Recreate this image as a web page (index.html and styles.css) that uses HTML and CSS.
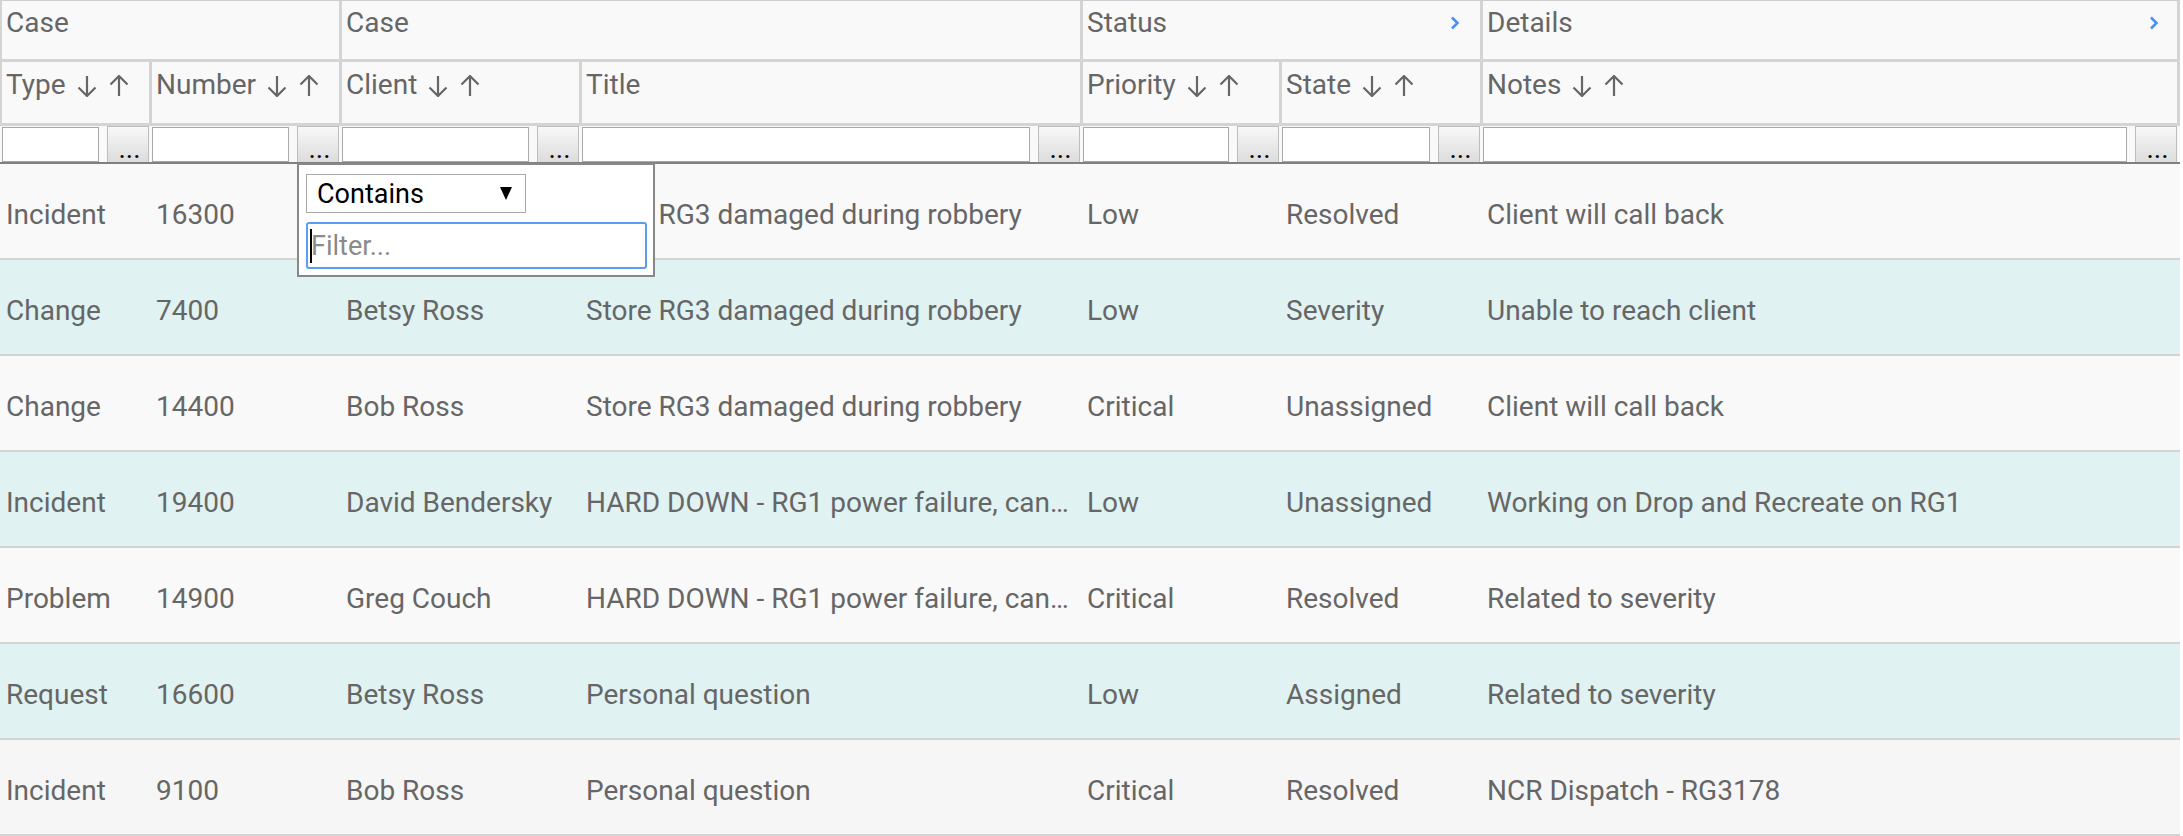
FILE: index.html
```html
<!DOCTYPE html>
<html lang="en">
<head>
<meta charset="utf-8">
<title>Cases grid</title>
<link rel="stylesheet" href="styles.css">
</head>
<body>
<div class="grid" role="grid">
  <div class="row hrow group" role="row">
    <div class="hcell span2" role="columnheader">Case</div>
    <div class="hcell span2" role="columnheader">Case</div>
    <div class="hcell span2" role="columnheader">Status
      <svg class="chev" width="10" height="14" viewBox="0 0 10 14"><polyline points="2,1.5 7.5,7 2,12.5" fill="none" stroke="#4b8df8" stroke-width="2.5"/></svg>
    </div>
    <div class="hcell" role="columnheader">Details
      <svg class="chev chev-last" width="10" height="14" viewBox="0 0 10 14"><polyline points="2,1.5 7.5,7 2,12.5" fill="none" stroke="#4b8df8" stroke-width="2.5"/></svg>
    </div>
  </div>
  <div class="row hrow cols" role="row">
    <div class="hcell" role="columnheader"><span>Type</span><span class="sort"><svg class="arrow" viewBox="0 0 22 22"><path d="M11 1V21M2.5 12.5L11 21L19.5 12.5"/></svg><svg class="arrow" viewBox="0 0 22 22"><path d="M11 21V1M2.5 9.5L11 1L19.5 9.5"/></svg></span></div>
    <div class="hcell" role="columnheader"><span>Number</span><span class="sort"><svg class="arrow" viewBox="0 0 22 22"><path d="M11 1V21M2.5 12.5L11 21L19.5 12.5"/></svg><svg class="arrow" viewBox="0 0 22 22"><path d="M11 21V1M2.5 9.5L11 1L19.5 9.5"/></svg></span></div>
    <div class="hcell" role="columnheader"><span>Client</span><span class="sort"><svg class="arrow" viewBox="0 0 22 22"><path d="M11 1V21M2.5 12.5L11 21L19.5 12.5"/></svg><svg class="arrow" viewBox="0 0 22 22"><path d="M11 21V1M2.5 9.5L11 1L19.5 9.5"/></svg></span></div>
    <div class="hcell" role="columnheader"><span>Title</span></div>
    <div class="hcell" role="columnheader"><span>Priority</span><span class="sort"><svg class="arrow" viewBox="0 0 22 22"><path d="M11 1V21M2.5 12.5L11 21L19.5 12.5"/></svg><svg class="arrow" viewBox="0 0 22 22"><path d="M11 21V1M2.5 9.5L11 1L19.5 9.5"/></svg></span></div>
    <div class="hcell" role="columnheader"><span>State</span><span class="sort"><svg class="arrow" viewBox="0 0 22 22"><path d="M11 1V21M2.5 12.5L11 21L19.5 12.5"/></svg><svg class="arrow" viewBox="0 0 22 22"><path d="M11 21V1M2.5 9.5L11 1L19.5 9.5"/></svg></span></div>
    <div class="hcell" role="columnheader"><span>Notes</span><span class="sort"><svg class="arrow" viewBox="0 0 22 22"><path d="M11 1V21M2.5 12.5L11 21L19.5 12.5"/></svg><svg class="arrow" viewBox="0 0 22 22"><path d="M11 21V1M2.5 9.5L11 1L19.5 9.5"/></svg></span></div>
  </div>
  <div class="row filters" role="row">
    <div class="fcell"><input class="finput" type="text"><button class="fbtn">...</button></div>
    <div class="fcell"><input class="finput" type="text"><button class="fbtn">...</button></div>
    <div class="fcell"><input class="finput" type="text"><button class="fbtn">...</button></div>
    <div class="fcell"><input class="finput" type="text"><button class="fbtn">...</button></div>
    <div class="fcell"><input class="finput" type="text"><button class="fbtn">...</button></div>
    <div class="fcell"><input class="finput" type="text"><button class="fbtn">...</button></div>
    <div class="fcell"><input class="finput" type="text"><button class="fbtn">...</button></div>
  </div>

  <div class="row drow odd" role="row">
    <div class="dcell">Incident</div><div class="dcell">16300</div><div class="dcell">Greg Couch</div>
    <div class="dcell">Store RG3 damaged during robbery</div><div class="dcell">Low</div><div class="dcell">Resolved</div><div class="dcell">Client will call back</div>
  </div>
  <div class="row drow even" role="row">
    <div class="dcell">Change</div><div class="dcell">7400</div><div class="dcell">Betsy Ross</div>
    <div class="dcell">Store RG3 damaged during robbery</div><div class="dcell">Low</div><div class="dcell">Severity</div><div class="dcell">Unable to reach client</div>
  </div>
  <div class="row drow odd" role="row">
    <div class="dcell">Change</div><div class="dcell">14400</div><div class="dcell">Bob Ross</div>
    <div class="dcell">Store RG3 damaged during robbery</div><div class="dcell">Critical</div><div class="dcell">Unassigned</div><div class="dcell">Client will call back</div>
  </div>
  <div class="row drow even" role="row">
    <div class="dcell">Incident</div><div class="dcell">19400</div><div class="dcell">David Bendersky</div>
    <div class="dcell">HARD DOWN - RG1 power failure, cannot process transactions</div><div class="dcell">Low</div><div class="dcell">Unassigned</div><div class="dcell">Working on Drop and Recreate on RG1</div>
  </div>
  <div class="row drow odd" role="row">
    <div class="dcell">Problem</div><div class="dcell">14900</div><div class="dcell">Greg Couch</div>
    <div class="dcell">HARD DOWN - RG1 power failure, cannot process transactions</div><div class="dcell">Critical</div><div class="dcell">Resolved</div><div class="dcell">Related to severity</div>
  </div>
  <div class="row drow even" role="row">
    <div class="dcell">Request</div><div class="dcell">16600</div><div class="dcell">Betsy Ross</div>
    <div class="dcell">Personal question</div><div class="dcell">Low</div><div class="dcell">Assigned</div><div class="dcell">Related to severity</div>
  </div>
  <div class="row drow hover" role="row">
    <div class="dcell">Incident</div><div class="dcell">9100</div><div class="dcell">Bob Ross</div>
    <div class="dcell">Personal question</div><div class="dcell">Critical</div><div class="dcell">Resolved</div><div class="dcell">NCR Dispatch - RG3178</div>
  </div>

  <div class="popup">
    <div class="op-select"><span>Contains</span>
      <svg width="12" height="14" viewBox="0 0 12 14"><polygon points="0,0 12,0 6,13" fill="#000"/></svg>
    </div>
    <div class="filter-box">
      <input class="filter-input" type="text" placeholder="Filter...">
      <span class="caret"></span>
    </div>
  </div>
</div>
</body>
</html>
```

FILE: styles.css
```css
* { box-sizing: border-box; }
html, body { margin: 0; background: #fff; }
body {
  font-family: Roboto, "Noto Sans", "Liberation Sans", sans-serif;
  color: #666;
}
.grid {
  position: relative;
  width: 2180px;
  border-top: 1px solid #cfcfcf;
  box-shadow: inset 0 2px 2px -1px rgba(0, 0, 0, 0.12);
}
.row {
  display: grid;
  grid-template-columns: 152px 190px 240px 501px 199px 201px 697px;
}
.hrow { background: #f9f9f9; }
.hcell {
  display: flex;
  justify-content: space-between;
  align-items: flex-start;
  border-right: 3px solid #d4d4d4;
  border-bottom: 3px solid #d4d4d4;
  padding: 5px 5px 0 4px;
  font-size: 28px;
  line-height: 33px;
  white-space: nowrap;
  overflow: hidden;
}
.hcell:first-child { border-left: 2px solid #d4d4d4; }
.group .hcell { height: 61px; }
.cols .hcell { height: 64px; justify-content: flex-start; padding-top: 6px; }
.span2 { grid-column: span 2; }
.sort {
  display: flex;
  gap: 10px;
  margin: 7px 0 0 10px;
}
.arrow {
  width: 22px;
  height: 22px;
  fill: none;
  stroke: #666;
  stroke-width: 2.2;
}
.chev { margin-top: 10px; margin-right: 15px; }
.chev-last { margin-right: 13px; }

.filters {
  height: 38px;
  background: #f9f9f9;
  border-bottom: 2px solid #808080;
}
.fcell {
  display: flex;
  align-items: flex-start;
  border-right: 3px solid transparent;
  overflow: hidden;
}
.fcell:first-child { border-left: 2px solid transparent; }
.finput {
  flex: 1;
  min-width: 0;
  height: 35px;
  margin: 1px 8px 0 0;
  border: 1px solid #a9a9a9;
  background: #fff;
  padding: 0;
}
.fbtn {
  flex: none;
  width: 42px;
  height: 36px;
  padding: 5px 0 0 3px;
  border: 1px solid #bdbdbd;
  border-bottom: 0;
  background: linear-gradient(#f8f8f8, #dcdcdc);
  font-family: Roboto, sans-serif;
  font-size: 28px;
  line-height: 33px;
  color: #000;
  text-align: center;
  overflow: hidden;
  white-space: nowrap;
}

.drow {
  height: 96px;
  border-bottom: 2px solid #d4d4d4;
  align-items: center;
}
.odd { background: #f9f9f9; }
.even { background: #e0f2f1; }
.hover { background: #f6f6f6; }
.dcell {
  padding: 7px 5px 0 4px;
  border-right: 3px solid transparent;
  font-size: 28px;
  line-height: 33px;
  white-space: nowrap;
  overflow: hidden;
  text-overflow: ellipsis;
}
.dcell:first-child { border-left: 2px solid transparent; }

.popup {
  position: absolute;
  left: 297px;
  top: 162px;
  width: 358px;
  height: 114px;
  border: 2px solid #888;
  background: #fff;
  padding: 9px 6px 0 7px;
  z-index: 2;
}
.op-select {
  display: flex;
  align-items: center;
  justify-content: space-between;
  width: 220px;
  height: 39px;
  border: 1px solid #a9a9a9;
  background: #fff;
  padding: 0 13px 0 10px;
  font-size: 27px;
  color: #000;
}
.filter-box {
  position: relative;
  margin-top: 9px;
}
.filter-input {
  display: block;
  width: 100%;
  height: 47px;
  border: 2px solid #5b9cf5;
  border-radius: 3px;
  padding: 0 3px;
  font-family: Roboto, sans-serif;
  font-size: 27px;
  color: #333;
  background: #fff;
  outline: none;
}
.filter-input::placeholder { color: #8a8a8a; }
.caret {
  position: absolute;
  left: 4px;
  top: 7px;
  width: 2px;
  height: 34px;
  background: #000;
}
```
